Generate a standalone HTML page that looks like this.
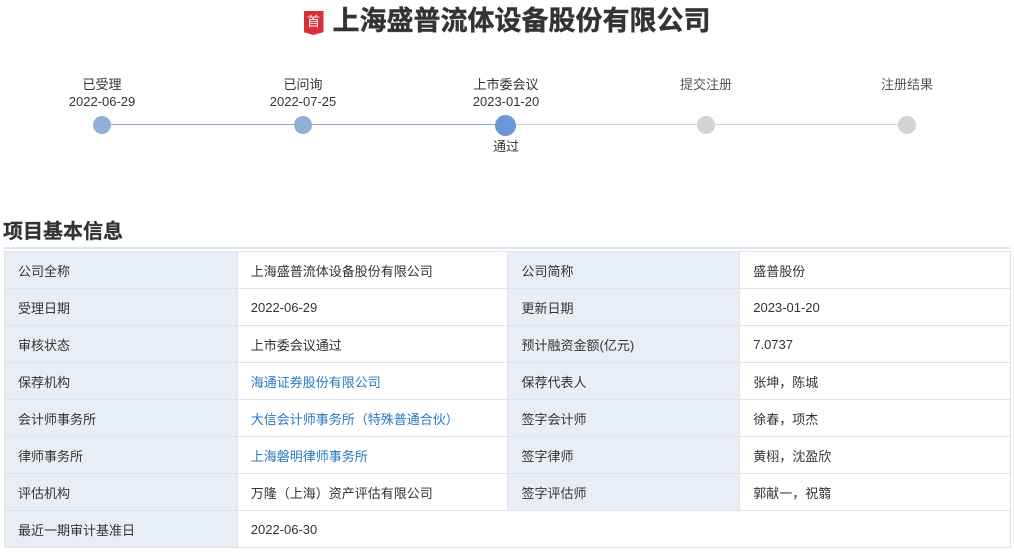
<!DOCTYPE html>
<html><head><meta charset="utf-8"><style>
body{margin:0;width:1014px;height:552px;background:#fff;font-family:"Liberation Sans","Noto Sans CJK SC",sans-serif;color:#333;position:relative;overflow:hidden}
.t{position:absolute;top:3px;left:0;width:1014px;text-align:center;font-size:27px;font-weight:bold;color:#333;line-height:36px;-webkit-text-stroke:0.4px #333}
.badge{display:inline-block;width:20px;height:24px;background:#d9303a;color:#fff;font-size:13px;line-height:22px;vertical-align:4px;margin-right:9px;font-weight:normal;-webkit-text-stroke:0;clip-path:polygon(0 0,100% 0,100% 88%,50% 100%,0 88%)}
.lbl{position:absolute;width:140px;text-align:center;font-size:13px;line-height:17px;color:#333}
.dot{position:absolute;width:18px;height:18px;border-radius:50%;top:116px}
.h{position:absolute;left:3px;top:215px;font-size:20px;font-weight:bold;color:#333;-webkit-text-stroke:0.3px #333}
.hl{position:absolute;left:4px;top:247px;width:1006px;height:2px;background:#dde6f0}
table{position:absolute;left:4px;top:251px;border-collapse:collapse;width:1007px;font-size:13px}
td{border:1px solid #dfe3e8;height:37px;padding:0 0 0 13px;box-sizing:border-box}
td.k{background:#e8eef6}
a{color:#2a78c2;text-decoration:none}
</style></head><body>
<div class="t"><span class="badge">首</span>上海盛普流体设备股份有限公司</div>
<div style="position:absolute;left:102px;top:124px;width:404px;height:1px;background:#8fa9cc"></div>
<div style="position:absolute;left:506px;top:124px;width:401px;height:1px;background:#d0d0d0"></div>
<div class="lbl" style="left:32px;top:76px">已受理<br>2022-06-29</div>
<div class="lbl" style="left:233px;top:76px">已问询<br>2022-07-25</div>
<div class="lbl" style="left:436px;top:76px">上市委会议<br>2023-01-20</div>
<div class="lbl" style="left:636px;top:76px;color:#555">提交注册</div>
<div class="lbl" style="left:837px;top:76px;color:#555">注册结果</div>
<div class="lbl" style="left:436px;top:138px">通过</div>
<div class="dot" style="left:93px;background:#93afd6"></div>
<div class="dot" style="left:294px;background:#93afd6"></div>
<div class="dot" style="left:495px;top:115px;width:21px;height:21px;background:#6b98d4"></div>
<div class="dot" style="left:697px;background:#d3d3d3"></div>
<div class="dot" style="left:898px;background:#d3d3d3"></div>
<div class="h">项目基本信息</div>
<div class="hl"></div>
<table>
<colgroup><col style="width:233px"><col style="width:271px"><col style="width:232px"><col style="width:271px"></colgroup>
<tr><td class="k">公司全称</td><td>上海盛普流体设备股份有限公司</td><td class="k">公司简称</td><td>盛普股份</td></tr>
<tr><td class="k">受理日期</td><td>2022-06-29</td><td class="k">更新日期</td><td>2023-01-20</td></tr>
<tr><td class="k">审核状态</td><td>上市委会议通过</td><td class="k">预计融资金额(亿元)</td><td>7.0737</td></tr>
<tr><td class="k">保荐机构</td><td><a>海通证券股份有限公司</a></td><td class="k">保荐代表人</td><td>张坤，陈城</td></tr>
<tr><td class="k">会计师事务所</td><td><a>大信会计师事务所（特殊普通合伙）</a></td><td class="k">签字会计师</td><td>徐春，项杰</td></tr>
<tr><td class="k">律师事务所</td><td><a>上海磐明律师事务所</a></td><td class="k">签字律师</td><td>黄栩，沈盈欣</td></tr>
<tr><td class="k">评估机构</td><td>万隆（上海）资产评估有限公司</td><td class="k">签字评估师</td><td>郭献一，祝篛</td></tr>
<tr><td class="k">最近一期审计基准日</td><td colspan="3">2022-06-30</td></tr>
</table>
</body></html>
